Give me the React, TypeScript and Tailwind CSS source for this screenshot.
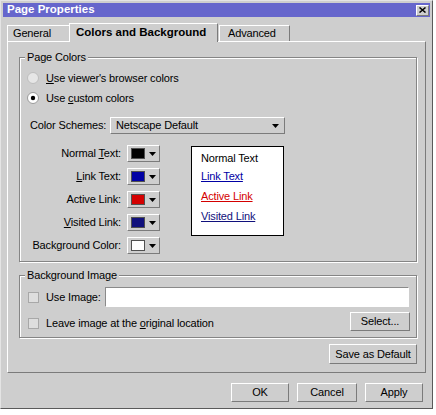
import React from "react";

const FONT = "font-['Liberation_Sans',Arial,sans-serif]";

function Raised({ className = "", children }: { className?: string; children?: React.ReactNode }) {
  return (
    <div className={`flex items-center whitespace-nowrap border border-t-white border-l-white border-b-[#7b7b7b] border-r-[#7b7b7b] bg-[#cecece] ${className}`}>
      {children}
    </div>
  );
}

function Arrow() {
  return (
    <svg width="7" height="4" viewBox="0 0 7 4" className="shrink-0">
      <path d="M0 0h7L3.5 4z" fill="#000" />
    </svg>
  );
}

function Radio({ checked }: { checked?: boolean }) {
  return (
    <svg width="12" height="12" viewBox="0 0 12 12" className="shrink-0">
      <circle cx="6" cy="6" r="5.5" fill={checked ? "#fff" : "#e6e6e6"} stroke={checked ? "#9a9a9a" : "#bdbdbd"} />
      {checked && <circle cx="6" cy="6" r="2.2" fill="#000" />}
    </svg>
  );
}

function Check() {
  return <div className="h-[11px] w-[11px] shrink-0 border border-[#a8a8a8] bg-[#dedede]" />;
}

function GroupBox({ title, className = "", children }: { title: string; className?: string; children?: React.ReactNode }) {
  return (
    <div className={`relative border border-[#858585] shadow-[inset_1px_1px_0_#fff,1px_1px_0_#fff] ${className}`}>
      <span className="absolute -top-[8px] left-[5px] whitespace-nowrap bg-[#cecece] px-[2px] leading-[14px]">{title}</span>
      {children}
    </div>
  );
}

const ROWS: { label: React.ReactNode; swatch: string }[] = [
  { label: <>Normal <u>T</u>ext:</>, swatch: "bg-[#000000]" },
  { label: <><u>L</u>ink Text:</>, swatch: "bg-[#0000a4]" },
  { label: <>Active Link:</>, swatch: "bg-[#d40000]" },
  { label: <><u>V</u>isited Link:</>, swatch: "bg-[#10107c]" },
  { label: <>Background Color:</>, swatch: "bg-[#ffffff]" },
];

export default function App() {
  return (
    <div className={`h-[415px] w-[436px] bg-white text-[11px] tracking-[-0.15px] text-black ${FONT}`}>
      <div className="flex h-[409px] w-[433px] flex-col border border-t-[#e4e4e4] border-l-[#e4e4e4] border-b-[#5a5a5a] border-r-[#5a5a5a] bg-[#cecece] p-[2px]">
        {/* title bar */}
        <div className="flex h-[14px] items-center justify-between bg-[#6666cc] pl-[4px] pr-[1px]">
          <span className="text-[11.5px] font-bold leading-none tracking-normal text-white">Page Properties</span>
          <Raised className="h-[11px] w-[13px] justify-center">
            <svg width="7" height="6" viewBox="0 0 7 6">
              <path d="M0.5 0.5l6 5M6.5 0.5l-6 5" stroke="#000" strokeWidth="1.5" />
            </svg>
          </Raised>
        </div>

        {/* tabs */}
        <div className="ml-[4px] mt-[5px] flex h-[19px] items-end whitespace-nowrap">
          <div className="flex h-[16px] w-[63px] items-center border border-b-0 border-t-white border-l-white border-r-[#7b7b7b] pl-[5px]">General</div>
          <div className="relative z-10 -mb-px -ml-[1px] flex h-[19px] w-[149px] items-center border border-b-0 border-t-white border-l-white border-r-[#7b7b7b] bg-[#cecece] pl-[6px] text-[11.5px] font-bold tracking-normal">
            Colors and Background
          </div>
          <div className="ml-[1px] flex h-[16px] w-[71px] items-center border border-b-0 border-t-white border-l-white border-r-[#7b7b7b] pl-[8px]">Advanced</div>
        </div>

        {/* panel */}
        <div className="ml-[4px] flex h-[332px] w-[419px] flex-col border border-t-white border-l-white border-b-[#7b7b7b] border-r-[#7b7b7b] pb-[8px] pl-[11px] pr-[8px]">
          <GroupBox title="Page Colors" className="mt-[15px] h-[206px] w-[398px]">
            <div className="ml-[7px] mt-[13px] flex h-[14px] items-center gap-[7px] whitespace-nowrap">
              <Radio />
              <span><u>U</u>se viewer&apos;s browser colors</span>
            </div>
            <div className="ml-[7px] mt-[6px] flex h-[14px] items-center gap-[7px] whitespace-nowrap">
              <Radio checked />
              <span>Use <u>c</u>ustom colors</span>
            </div>
            <div className="ml-[10px] mt-[12px] flex h-[17px] items-center whitespace-nowrap">
              <span className="w-[80px]">Color Schemes:</span>
              <Raised className="h-[17px] w-[175px] justify-between pl-[5px] pr-[5px]">
                <span>Netscape Default</span>
                <Arrow />
              </Raised>
            </div>
            <div className="mt-[11px] flex">
              <div className="flex flex-col gap-[6px]">
                {ROWS.map((r, i) => (
                  <div key={i} className="flex h-[17px] items-center whitespace-nowrap">
                    <span className="w-[101px] text-right">{r.label}</span>
                    <Raised className="ml-[6px] h-[17px] w-[33px] gap-[4px] pl-[3px]">
                      <div className={`h-[11px] w-[14px] border border-[#505050] ${r.swatch}`} />
                      <Arrow />
                    </Raised>
                  </div>
                ))}
              </div>
              <div className="ml-[31px] mt-[1px] flex h-[90px] w-[93px] flex-col whitespace-nowrap border border-black bg-white pl-[9px] pt-[4px] leading-[14px]">
                <span>Normal Text</span>
                <span className="mt-[4px] text-[#0000a4] underline">Link Text</span>
                <span className="mt-[6px] text-[#d40000] underline">Active Link</span>
                <span className="mt-[6px] text-[#10107c] underline">Visited Link</span>
              </div>
            </div>
          </GroupBox>

          <GroupBox title="Background Image" className="mt-[13px] h-[63px] w-[398px]">
            <div className="ml-[8px] mt-[11px] flex h-[20px] items-center whitespace-nowrap">
              <Check />
              <span className="ml-[7px] w-[59px]">Use Image:</span>
              <div className="h-[20px] w-[304px] border border-t-[#8a8a8a] border-l-[#8a8a8a] border-b-white border-r-white bg-white" />
            </div>
            <div className="ml-[8px] mt-[5px] flex h-[19px] items-center whitespace-nowrap">
              <div className="flex items-center pt-[3px]">
                <Check />
                <span className="ml-[7px]">Leave image at the <u>o</u>riginal location</span>
              </div>
              <Raised className="ml-auto mr-[6px] h-[19px] w-[60px] justify-center">Select...</Raised>
            </div>
          </GroupBox>

          <div className="mt-[6px] flex justify-end">
            <Raised className="h-[20px] w-[88px] justify-center">Save as Default</Raised>
          </div>
        </div>

        {/* dialog buttons */}
        <div className="mt-[10px] flex justify-end gap-[8px] pr-[7px]">
          <Raised className="h-[19px] w-[58px] justify-center">OK</Raised>
          <Raised className="h-[19px] w-[60px] justify-center">Cancel</Raised>
          <Raised className="h-[19px] w-[58px] justify-center">Apply</Raised>
        </div>
      </div>
    </div>
  );
}
